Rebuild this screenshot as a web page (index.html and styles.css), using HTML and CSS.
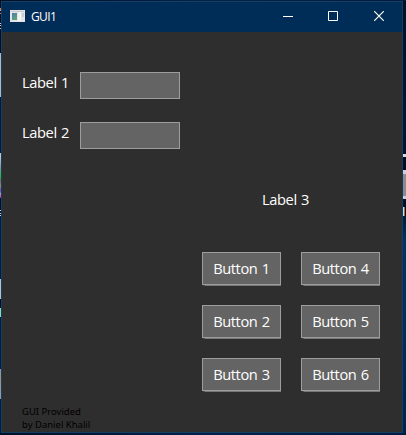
FILE: index.html
```html
<!DOCTYPE html>
<html lang="en">
<head>
<meta charset="utf-8">
<title>GUI1</title>
<link rel="stylesheet" href="styles.css">
</head>
<body>
<div class="desktop">
  <div class="edge-left"></div>
  <main class="window">
    <header class="titlebar">
      <svg class="app-icon" width="16" height="13" viewBox="0 0 16 13">
        <defs><linearGradient id="pane" x1="0" y1="0" x2="0.6" y2="1"><stop offset="0" stop-color="#5378a8"/><stop offset="1" stop-color="#58a878"/></linearGradient></defs>
        <path fill="#e4e4e8" d="M0 0h15v12H0z"/>
        <path fill="#c4c8d0" d="M1 1h13v1H1z"/>
        <path fill="url(#pane)" d="M2 3h5v7H2z"/>
        <path fill="#f4f4f4" d="M8 2h3v9H8z"/>
        <path fill="#c9cdd0" d="M12 3h2v4h-2z"/>
      </svg>
      <span class="title">GUI1</span>
      <div class="controls">
        <svg width="10" height="10"><path fill="#fff" d="M0 5h10v1H0z"/></svg>
        <svg width="10" height="10"><path fill="none" stroke="#fff" d="M.5.5h9v9h-9z"/></svg>
        <svg class="close" width="10" height="10"><path fill="none" stroke="#fff" stroke-width="1.2" d="M.2.2l9.6 9.6M9.8.2L.2 9.8"/></svg>
      </div>
    </header>
    <section class="client">
      <div class="fields">
        <label class="field"><span class="label">Label 1</span><input class="entry" type="text"></label>
        <label class="field"><span class="label">Label 2</span><input class="entry" type="text"></label>
      </div>
      <div class="label output">Label 3</div>
      <div class="buttons">
        <button class="button">Button 1</button><button class="button">Button 4</button>
        <button class="button">Button 2</button><button class="button">Button 5</button>
        <button class="button">Button 3</button><button class="button">Button 6</button>
      </div>
      <footer class="credit">GUI Provided<br>by Daniel Khalil</footer>
    </section>
  </main>
  <div class="edge-right"></div>
</div>
</body>
</html>
```

FILE: styles.css
```css
* { box-sizing: border-box; }
body { margin: 0; font-family: "Open Sans", "Noto Sans", sans-serif; color: #fff; }
.desktop {
  display: grid;
  grid-template-columns: 1px 402px 3px;
  grid-template-rows: 432px;
  padding-top: 1px;
  height: 435px;
  overflow: hidden;
  background: linear-gradient(90deg, #001027, #00224a 50%, #001c40);
}
.edge-left {
  background: linear-gradient(#001027 7px, #d08050 7px 9px, #a0a0b0 9px 10px, #101020 10px 12px, #d08050 12px 13px, #001027 13px 22px, #d0c8ff 22px 23px, #000 23px 24px, #d0c8ff 24px 25px, #000 25px 27px, #d0c8a0 27px 28px, #001027 28px 52px, #b0b8bd 52px 96px, #001a3a 96px 152px, #c0c8c8 152px 156px, #809080 168px, #28c020 175px, #806060 180px, #a08868 185px, #6048b8 190px, #b8a0a0 193px, #d030a0 196px, #b030a0 197px, #001027 197px 209px, #d0d0d0 209px 210px, #001027 210px 212px, #d0d0d0 212px 213px, #001027 213px 214px, #d0d0d0 214px 215px, #001c3e 215px 278px, #c0c0bc 278px 298px, #001027 298px 307px, #90d8b0 307px 316px, #001c3e 316px 368px, #989490 368px, #a88f78 380px, #90a0b0 398px, #001c3e 398px);
}
.edge-right {
  background: linear-gradient(#001027 0, #001733 120px, #00142c 153px, #d5d8dc 153px 156px, #000d20 156px 169px, #d0d0d0 169px 173px, #8c8c8c 173px 195px, #d0d0d0 195px 198px, #001027 198px 206px, transparent 206px 215px, #001a38 215px, #003462 240px, #002e59 340px, #002448),
    linear-gradient(90deg, #b0e8ff 1px, #c06028 1px 2px, #001027 2px);
}
.window {
  display: flex;
  flex-direction: column;
  border: 1px solid #173d63;
  background: #2e2e2e;
}
.titlebar {
  display: flex;
  align-items: center;
  flex: 0 0 30px;
  padding: 0 18px 0 8px;
  background: #002d57;
}
.app-icon { margin-top: -1px; }
.title { margin-left: 5px; font-size: 12px; line-height: 16px; letter-spacing: -.6px; }
.controls { display: flex; gap: 35px; margin-left: auto; margin-top: -2px; }
.controls svg { display: block; }
.controls .close { margin-left: 1px; }
.client { display: flex; flex: 1; flex-direction: column; padding: 40px 22px 0 20px; }
.fields { display: grid; gap: 23px; }
.field { display: flex; height: 27px; }
.label { width: 58px; font-size: 14.67px; line-height: 20px; letter-spacing: -.4px; word-spacing: 1px; white-space: nowrap; }
.entry {
  width: 100px;
  height: 27px;
  padding: 0 5px;
  border: 1px solid #9d9d9d;
  border-radius: 0;
  outline: 0;
  background: #646464;
  color: #fff;
}
.output { margin: 40px 0 0 240px; }
.buttons {
  display: grid;
  grid-template-columns: 79px 79px;
  grid-auto-rows: 33px;
  gap: 20px;
  margin: 43px 0 0 180px;
}
.button {
  padding: 0 0 1px;
  border: 1px solid #9d9d9d;
  border-radius: 0;
  background: #646464;
  box-shadow: 0 1px 1px -.5px #777;
  color: #fff;
  font: 14.67px/22px "Open Sans", "Noto Sans", sans-serif;
  letter-spacing: -.4px;
  word-spacing: 1px;
  white-space: nowrap;
}
.credit { margin-top: 14px; color: #000; font-family: "Noto Sans", sans-serif; font-size: 9.5px; line-height: 13px; }
```
